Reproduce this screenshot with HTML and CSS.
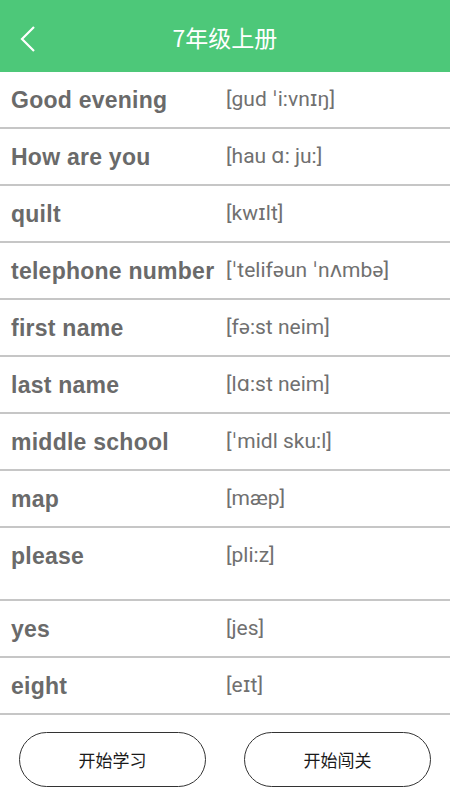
FILE: index.html
```html
<!DOCTYPE html>
<html lang="zh-CN">
<head>
    <meta charset="UTF-8">
    <meta name="viewport" content="width=device-width, initial-scale=1.0">
    <title>7年级上册</title>
    <link rel="stylesheet" href="styles.css">
</head>
<body>
    <header class="topbar">
        <a class="back" href="#">
            <svg width="20" height="28" viewBox="0 0 20 28">
                <polyline points="16,2 4,14 16,26" fill="none" stroke="#fff" stroke-width="2.2" stroke-linejoin="miter"/>
            </svg>
        </a>
        <h1>7年级上册</h1>
    </header>

    <ul class="words">
        <li class="word"><span class="en">Good evening</span><span class="ipa">[gud ˈi:vnɪŋ]</span></li>
        <li class="word"><span class="en">How are you</span><span class="ipa">[hau ɑ: ju:]</span></li>
        <li class="word"><span class="en">quilt</span><span class="ipa">[kwɪlt]</span></li>
        <li class="word"><span class="en">telephone number</span><span class="ipa">[ˈtelifəun ˈnʌmbə]</span></li>
        <li class="word"><span class="en">first name</span><span class="ipa">[fə:st neim]</span></li>
        <li class="word"><span class="en">last name</span><span class="ipa">[lɑ:st neim]</span></li>
        <li class="word"><span class="en">middle school</span><span class="ipa">[ˈmidl sku:l]</span></li>
        <li class="word"><span class="en">map</span><span class="ipa">[mæp]</span></li>
        <li class="word tall"><span class="en">please</span><span class="ipa">[pli:z]</span></li>
        <li class="word"><span class="en">yes</span><span class="ipa">[jes]</span></li>
        <li class="word"><span class="en">eight</span><span class="ipa">[eɪt]</span></li>
    </ul>

    <footer class="actions">
        <button class="pill">开始学习</button>
        <button class="pill">开始闯关</button>
    </footer>
</body>
</html>
```

FILE: styles.css
```css
* {
    margin: 0;
    padding: 0;
    box-sizing: border-box;
}
body {
    width: 450px;
    height: 800px;
    overflow: hidden;
    background: #fff;
    font-family: "Liberation Sans", Arial, sans-serif;
}
.topbar {
    height: 72px;
    background: #4dc879;
    display: flex;
    align-items: center;
    justify-content: center;
    position: relative;
}
.topbar h1 {
    color: #fff;
    font-family: "Noto Sans CJK SC", sans-serif;
    font-weight: normal;
    font-size: 23px;
    margin-top: 2px;
}
.back {
    position: absolute;
    left: 18px;
    top: 25px;
}
.words {
    list-style: none;
}
.word {
    height: 57px;
    display: flex;
    align-items: flex-start;
    padding-top: 15px;
    border-bottom: 2px solid #c6c6c6;
}
.word.tall {
    height: 73px;
}
.en {
    width: 226px;
    padding-left: 11px;
    font-size: 23px;
    font-weight: bold;
    letter-spacing: 0.25px;
    color: #6a6a6a;
    white-space: nowrap;
}
.ipa {
    font-family: Roboto, "DejaVu Sans", sans-serif;
    font-size: 21px;
    color: #707070;
}
.actions {
    display: flex;
    justify-content: space-between;
    padding: 17px 19px 0;
}
.pill {
    width: 187px;
    height: 55px;
    border: 1px solid #333;
    border-radius: 28px;
    background: #fff;
    font-family: "Noto Sans CJK SC", sans-serif;
    font-size: 17px;
    color: #1a1a1a;
}
```
